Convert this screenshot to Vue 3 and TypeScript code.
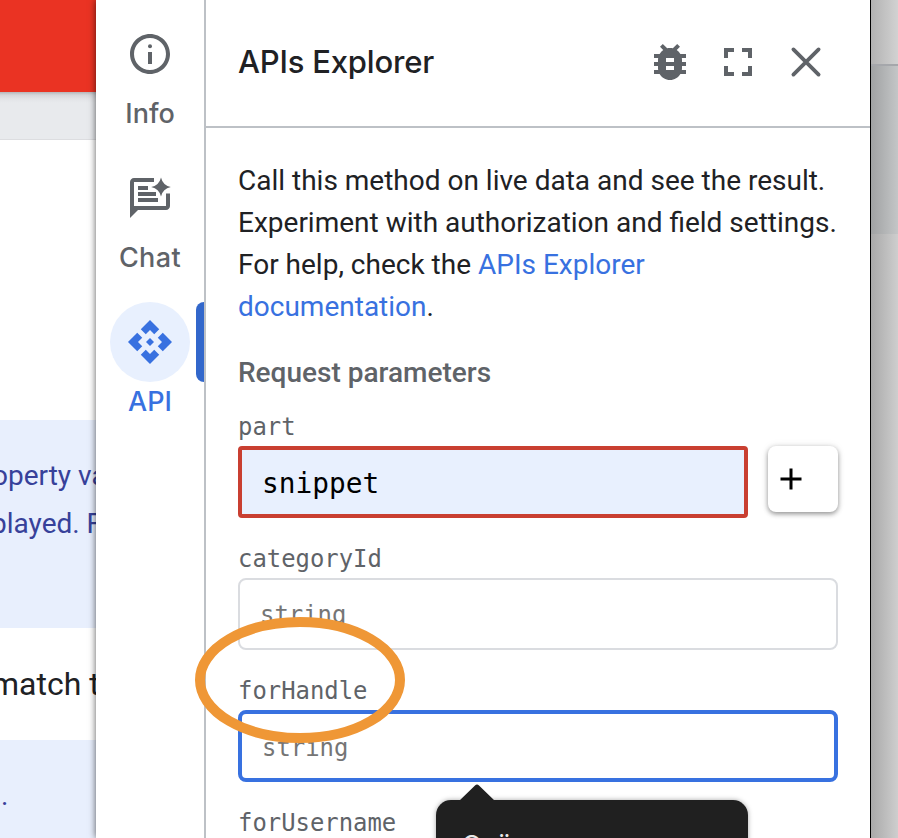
<script setup lang="ts">
import { ref } from 'vue'

const part = ref('snippet')
const categoryId = ref('')
const forHandle = ref('')
</script>

<template>
  <div class="screen">
    <div class="doc">
      <div class="banner"></div>
      <div class="strip"></div>
      <div class="sheet"></div>
      <div class="note"><p>operty va</p><p>played. F</p></div>
      <div class="row"><p>match t</p></div>
      <div class="note last"><p>.</p></div>
    </div>

    <aside class="panel">
      <nav class="rail">
        <div class="tab info">
          <svg width="48" height="48" viewBox="0 0 24 24"><path d="M11 17h2v-6h-2v6zm1-15C6.48 2 2 6.48 2 12s4.48 10 10 10 10-4.480 10-10S17.520 2 12 2zm0 18c-4.410 0-8-3.590-8-8s3.590-8 8-8 8 3.590 8 8-3.590 8-8 8z" /><circle cx="12" cy="8.100" r="1" /></svg>
          <span>Info</span>
        </div>
        <div class="tab chat">
          <svg width="48" height="48" viewBox="0 0 24 24"><path d="M14 2H4c-1.100 0-2 .9-2 2v18l4-4h14c1.100 0 2-.9 2-2V9.800h-2V16H4V4h10z" /><path d="M6 6h5v2H6zM6 9h9v2H6zM6 12h10v2H6z" /><path d="M17.500 1.700Q18.400 5.600 22.400 6.500Q18.400 7.400 17.500 11.200Q16.600 7.400 12.600 6.500Q16.600 5.600 17.500 1.700z" /></svg>
          <span>Chat</span>
        </div>
        <div class="tab api">
          <div class="bubble">
            <svg width="48" height="48" viewBox="0 0 24 24"><path d="M14 12l-2 2-2-2 2-2 2 2zm-2-6l2.120 2.120 2.500-2.500L12 1 7.380 5.620l2.500 2.500L12 6zm-6 6l2.120-2.120-2.500-2.500L1 12l4.620 4.620 2.500-2.500L6 12zm12 0l-2.120 2.120 2.500 2.500L23 12l-4.620-4.620-2.500 2.500L18 12zm-6 6l-2.120-2.120-2.500 2.500L12 23l4.620-4.620-2.500-2.500L12 18z" /></svg>
          </div>
          <span>API</span>
        </div>
      </nav>

      <section class="explorer">
        <header>
          <h1>APIs Explorer</h1>
          <svg width="48" height="48" viewBox="0 0 24 24"><path d="M20 8h-2.810c-.45-.78-1.070-1.450-1.820-1.960L17 4.410 15.590 3l-2.170 2.170C12.960 5.060 12.490 5 12 5s-.96.060-1.410.17L8.410 3 7 4.410l1.620 1.630C7.880 6.550 7.260 7.220 6.810 8H4v2h2.090c-.05.33-.09.66-.09 1v1H4v2h2v1c0 .34.040.67.090 1H4v2h2.810c1.040 1.790 2.970 3 5.190 3s4.150-1.210 5.190-3H20v-2h-2.090c.05-.33.090-.66.090-1v-1h2v-2h-2v-1c0-.34-.04-.67-.09-1H20V8zm-6 8h-4v-2h4v2zm0-4h-4v-2h4v2z" /></svg>
          <svg width="48" height="48" viewBox="0 0 24 24"><path d="M7 14H5v5h5v-2H7v-3zm-2-4h2V7h3V5H5v5zm12 7h-3v2h5v-5h-2v3zM14 5v2h3v3h2V5h-5z" /></svg>
          <svg width="48" height="48" viewBox="0 0 24 24"><path d="M5.700 5.700L18.300 18.300M18.300 5.700L5.700 18.300" class="cross" /></svg>
        </header>

        <div class="content">
          <p class="intro">Call this method on live data and see the result. Experiment with authorization and field settings. For help, check the <a>APIs Explorer documentation</a>.</p>
          <h2>Request parameters</h2>
          <div class="field">
            <label>part</label>
            <div class="line">
              <input v-model="part" class="invalid" />
              <button><svg width="22" height="22" viewBox="0 0 22 22"><path d="M11 0.500V21.500M.5 11H21.500" /></svg></button>
            </div>
          </div>
          <div class="field">
            <label>categoryId</label>
            <input v-model="categoryId" placeholder="string" />
          </div>
          <div class="field">
            <label>forHandle</label>
            <input v-model="forHandle" class="focused" placeholder="string" />
          </div>
          <div class="field"><label>forUsername</label></div>
        </div>
      </section>
    </aside>

    <div class="desktop"><div class="d1"></div><div class="d2"></div></div>

    <svg class="ring" width="212" height="128" viewBox="0 0 212 128"><ellipse cx="106" cy="64" rx="100" ry="58" /></svg>
    <div class="tip"><svg class="arrow" width="36" height="17" viewBox="0 0 36 17"><path d="M0 17L16 1.500Q18 -.5 20 1.500L36 17z" /></svg><span>Geö</span></div>
  </div>
</template>

<style>
body { overflow: hidden; }
</style>

<style scoped>
* { box-sizing: border-box; }
p, h1, h2 { margin: 0; font-weight: 400; }
.screen { position: relative; display: flex; width: 898px; height: 838px; overflow: hidden; background: #fff; font-family: Roboto, sans-serif; color: #202124; }
.doc { width: 96px; display: flex; flex-direction: column; overflow: hidden; white-space: nowrap; }
.doc > div { flex: none; }
.banner { height: 92px; background: #ea3323; }
.strip { height: 48px; background: linear-gradient(#b5b6ba 0, #d5d6da 3px, #e3e4e8 7px, #e8eaed 11px); border-bottom: 1px solid #dcdde0; }
.sheet { height: 280px; }
.note { height: 208px; padding-top: 32px; background: #e8effd; color: #37419a; font-size: 28px; line-height: 48px; }
.note p { margin-left: -9px; }
.note p:first-child { margin-left: -8px; }
.row { height: 112px; padding-top: 32px; font-size: 32px; line-height: 48px; }
.row p { margin-left: -9px; }
.last { height: 98px; padding-top: 32px; }
.note.last p { margin-left: 1px; }
.panel { z-index: 1; flex: none; display: flex; width: 775px; background: #fff; border-right: 1px solid #000; box-shadow: 0 0 7px rgba(0, 0, 0, .65); }
.rail { width: 110px; border-right: 2px solid #bdc1c6; color: #5f6368; font: 500 27px/36px Inter, sans-serif; }
.tab { display: flex; flex-direction: column; align-items: center; }
.tab svg { fill: currentColor; }
.info { height: 144px; padding-top: 30px; }
.tab span { margin-top: 18px; }
.chat { height: 158px; padding-top: 30px; }
.chat span { letter-spacing: .4px; }
.api { position: relative; color: #3871e0; }
.bubble { display: grid; place-items: center; width: 80px; height: 80px; border-radius: 50%; background: #e8f0fe; }
.api span { margin-top: 2px; }
.api::after { content: ''; position: absolute; top: 0; right: 0; width: 8px; height: 80px; border-radius: 8px 0 0 8px; background: #3267cb; }
.explorer { width: 664px; }
header { display: flex; align-items: center; height: 128px; padding: 0 40px 2px 32px; border-bottom: 2px solid #bdc1c6; gap: 20px; }
h1 { flex: 1; font: 500 31px/40px Inter, sans-serif; letter-spacing: -.2px; }
header svg { flex: none; fill: #5f6368; }
.cross { fill: none; stroke: #5f6368; stroke-width: 1.900; stroke-linecap: round; }
.content { padding: 32px 32px 0; }
.intro { font-size: 28px; line-height: 42px; }
a { color: #3871e0; }
h2 { margin-top: 27px; font-size: 28px; line-height: 36px; font-weight: 500; color: #5f6368; }
.field { display: flex; flex-direction: column; height: 132px; }
h2 + .field { margin-top: 19px; }
label { height: 36px; padding-top: 1px; font: 23.900px/32px "DejaVu Sans Mono", monospace; color: #5f6368; }
input { display: block; width: 100%; height: 72px; padding: 2px 20px 0; border: 2px solid #dadce0; border-radius: 8px; outline: 0; background: #fff; color: #000; font: 23.900px/32px "DejaVu Sans Mono", monospace; }
input::placeholder { color: #757575; opacity: 1; }
.focused { padding-top: 4px; border: 4px solid #3871e0; }
.invalid { width: 510px; padding-left: 20px; border: 4px solid #c93f31; border-radius: 4px; background: #e8f0fe; font-size: 27.800px; }
.line { display: flex; gap: 20px; }
button { width: 70px; height: 66px; padding: 0 0 0 12px; border: 0; border-radius: 8px; background: #fff; box-shadow: 0 2px 5px rgba(0, 0, 0, .4), 0 0 8px rgba(0, 0, 0, .08); text-align: left; }
button svg { display: block; fill: none; stroke: #000; stroke-width: 3; }
.desktop { z-index: 2; flex: 1; background: linear-gradient(90deg, #a9a9a9, #cecece); }
.d1 { height: 66px; border-bottom: 2px solid #a5a7ab; background: linear-gradient(90deg, #b2b2b2, #d2d2d2); }
.d2 { height: 168px; background: linear-gradient(90deg, #a0a2a3, #c4c6c7); }
.ring { position: absolute; z-index: 3; left: 194px; top: 616px; fill: none; stroke: #ef9736; stroke-width: 10; }
.tip { position: absolute; z-index: 2; left: 436px; top: 800px; width: 312px; height: 80px; padding: 29px 0 0 26px; border-radius: 15px; background: #202020; color: #e8e8e8; font: 26px/32px Inter, sans-serif; box-shadow: 0 0 5px rgba(0, 0, 0, .35); }
.arrow { position: absolute; left: 23px; top: -16px; fill: #202020; }
</style>
